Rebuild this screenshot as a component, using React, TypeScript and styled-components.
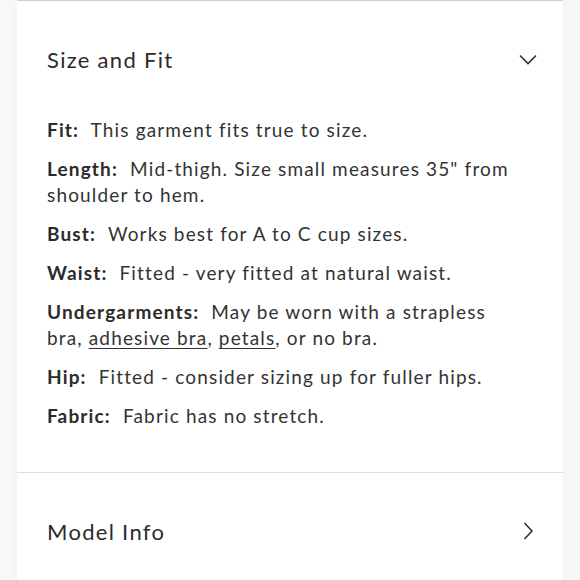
import React from "react";
import styled, { createGlobalStyle } from "styled-components";

const GlobalStyle = createGlobalStyle`
  html, body {
    margin: 0;
    padding: 0;
    background: #f8f8f8;
  }
  body {
    font-family: Lato, "Open Sans", Arial, sans-serif;
    color: #2e2e2e;
  }
`;

const Card = styled.div`
  margin: 0 17px;
  min-height: 580px;
  background: #ffffff;
  border-top: 1px solid #cfcfcf;
  box-shadow: 0 0 14px rgba(0, 0, 0, 0.04);
`;

const Section = styled.section<{ $divided?: boolean }>`
  border-top: ${(p) => (p.$divided ? "1px solid #dcdcdc" : "none")};
`;

const Header = styled.div`
  display: flex;
  align-items: center;
  justify-content: space-between;
  height: 116px;
  padding: 0 26px 0 30px;
`;

const HeaderTitle = styled.h2`
  margin: 0;
  font-size: 22px;
  font-weight: 400;
  letter-spacing: 1.3px;
  color: #2b2b2b;
`;

const IconSlot = styled.span`
  display: flex;
  align-items: center;
  justify-content: center;
  width: 18px;
  height: 18px;
`;

const Body = styled.div`
  padding: 0 45px 43px 30px;
`;

const Para = styled.p`
  margin: 0 0 13px;
  font-size: 19px;
  line-height: 26px;
  letter-spacing: 1.15px;
  white-space: pre-wrap;
  color: #333333;

  &:last-child {
    margin-bottom: 0;
  }
`;

const Label = styled.strong`
  font-weight: 700;
  color: #2b2b2b;
`;

const Link = styled.a`
  color: inherit;
  text-decoration: underline;
  text-underline-offset: 3px;
`;

type Detail = {
  label: string;
  text: React.ReactNode;
};

const details: Detail[] = [
  { label: "Fit:", text: "This garment fits true to size." },
  {
    label: "Length:",
    text: 'Mid-thigh. Size small measures 35" from shoulder to hem.',
  },
  { label: "Bust:", text: "Works best for A to C cup sizes." },
  { label: "Waist:", text: "Fitted - very fitted at natural waist." },
  {
    label: "Undergarments:",
    text: (
      <>
        May be worn with a strapless bra, <Link href="#">adhesive bra</Link>,{" "}
        <Link href="#">petals</Link>, or no bra.
      </>
    ),
  },
  { label: "Hip:", text: "Fitted - consider sizing up for fuller hips." },
  { label: "Fabric:", text: "Fabric has no stretch." },
];

const ChevronDown = () => (
  <svg width="18" height="11" viewBox="0 0 18 11" fill="none">
    <path d="M1 1.5L9 9.5L17 1.5" stroke="#2e2e2e" strokeWidth="1.6" />
  </svg>
);

const ChevronRight = () => (
  <svg width="10" height="18" viewBox="0 0 10 18" fill="none">
    <path d="M1.5 1L9 9L1.5 17" stroke="#2e2e2e" strokeWidth="1.6" />
  </svg>
);

export default function App() {
  return (
    <>
      <GlobalStyle />
      <Card>
        <Section>
          <Header>
            <HeaderTitle>Size and Fit</HeaderTitle>
            <IconSlot>
              <ChevronDown />
            </IconSlot>
          </Header>
          <Body>
            {details.map((d) => (
              <Para key={d.label}>
                <Label>{d.label}</Label>
                {"  "}
                {d.text}
              </Para>
            ))}
          </Body>
        </Section>
        <Section $divided>
          <Header>
            <HeaderTitle>Model Info</HeaderTitle>
            <IconSlot>
              <ChevronRight />
            </IconSlot>
          </Header>
        </Section>
      </Card>
    </>
  );
}
